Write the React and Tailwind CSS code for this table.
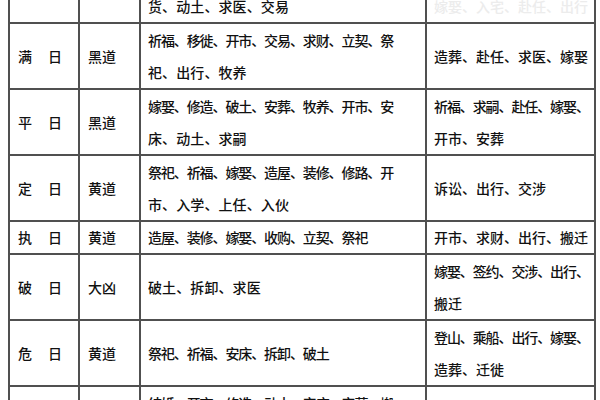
import React from 'react';

const rows = [
  {
    day: '除　日',
    road: '黄道',
    good: ['祭祀、祈福、求嗣、开光、出行、解除、纳', '货、动土、求医、交易'],
    bad: ['', '嫁娶、入宅、赴任、出行'],
    faded: true,
  },
  {
    day: '满　日',
    road: '黑道',
    good: ['祈福、移徙、开市、交易、求财、立契、祭', '祀、出行、牧养'],
    bad: ['造葬、赴任、求医、嫁娶'],
  },
  {
    day: '平　日',
    road: '黑道',
    good: ['嫁娶、修造、破土、安葬、牧养、开市、安', '床、动土、求嗣'],
    bad: ['祈福、求嗣、赴任、嫁娶、', '开市、安葬'],
  },
  {
    day: '定　日',
    road: '黄道',
    good: ['祭祀、祈福、嫁娶、造屋、装修、修路、开', '市、入学、上任、入伙'],
    bad: ['诉讼、出行、交涉'],
  },
  {
    day: '执　日',
    road: '黄道',
    good: ['造屋、装修、嫁娶、收购、立契、祭祀'],
    bad: ['开市、求财、出行、搬迁'],
    short: true,
  },
  {
    day: '破　日',
    road: '大凶',
    good: ['破土、拆卸、求医'],
    bad: ['嫁娶、签约、交涉、出行、', '搬迁'],
  },
  {
    day: '危　日',
    road: '黄道',
    good: ['祭祀、祈福、安床、拆卸、破土'],
    bad: ['登山、乘船、出行、嫁娶、', '造葬、迁徙'],
  },
  {
    day: '成　日',
    road: '黄道',
    good: ['结婚、开市、修造、动土、安床、安葬、搬', '迁、交易、求财、出行、立契'],
    bad: ['诉讼'],
  },
];

const Lines = ({ lines }) => (
  <>
    {lines.map((l, i) => (
      <div
        key={i}
        className={`whitespace-nowrap ${l.length >= 12 ? 'tracking-[-1.1px]' : ''}`}
      >
        {l || '\u00a0'}
      </div>
    ))}
  </>
);

export default function App() {
  return (
    <div
      className="w-[600px] h-[400px] overflow-hidden bg-white text-[#111] text-[14px] font-medium"
      style={{ fontFamily: '"Noto Sans CJK SC", "Noto Sans", sans-serif' }}
    >
      <table className="ml-[8px] mt-[-44px] w-[586px] table-fixed border-collapse">
        <colgroup>
          <col className="w-[70px]" />
          <col className="w-[61px]" />
          <col className="w-[286px]" />
          <col className="w-[169px]" />
        </colgroup>
        <tbody>
          {rows.map((r) => (
            <tr key={r.day} className={r.short ? 'leading-[31px]' : 'leading-[32px]'}>
              <td className={`border-2 border-[#505050] pl-[8px] align-middle tracking-[1px] ${r.faded ? 'text-[#ececec]' : ''}`}>
                {r.day}
              </td>
              <td className={`border-2 border-[#505050] pl-[8px] align-middle ${r.faded ? 'text-[#ececec]' : ''}`}>
                {r.road}
              </td>
              <td className="border-2 border-[#505050] pl-[7px] align-middle tracking-[0.1px]">
                <Lines lines={r.good} />
              </td>
              <td className={`border-2 border-[#505050] pl-[7px] align-middle ${r.faded ? 'text-[#ececec]' : ''}`}>
                <Lines lines={r.bad} />
              </td>
            </tr>
          ))}
        </tbody>
      </table>
    </div>
  );
}
